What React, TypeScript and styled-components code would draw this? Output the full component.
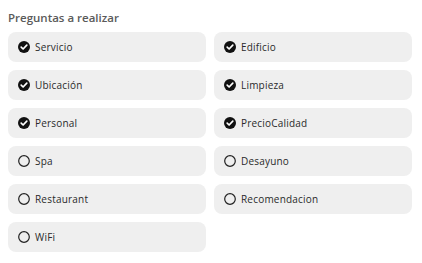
import styled, { createGlobalStyle } from "styled-components";

const GlobalStyle = createGlobalStyle`
  body {
    margin: 0;
    background: #ffffff;
    font-family: "Open Sans", "Liberation Sans", sans-serif;
  }
`;

const questions = [
  { label: "Servicio", checked: true },
  { label: "Edificio", checked: true },
  { label: "Ubicación", checked: true },
  { label: "Limpieza", checked: true },
  { label: "Personal", checked: true },
  { label: "PrecioCalidad", checked: true },
  { label: "Spa", checked: false },
  { label: "Desayuno", checked: false },
  { label: "Restaurant", checked: false },
  { label: "Recomendacion", checked: false },
  { label: "WiFi", checked: false },
];

const CheckIcon = ({ checked }: { checked: boolean }) =>
  checked ? (
    <svg width="12" height="12" viewBox="0 0 12 12">
      <circle cx="6" cy="6" r="6" fill="#111" />
      <path d="M3.2 6.2 L5.1 8 L8.8 4.2" stroke="#fff" strokeWidth="1.7" fill="none" strokeLinecap="round" strokeLinejoin="round" />
    </svg>
  ) : (
    <svg width="12" height="12" viewBox="0 0 12 12">
      <circle cx="6" cy="6" r="5.3" fill="none" stroke="#222" strokeWidth="1.2" />
    </svg>
  );

const App = () => {
  return (
    <>
      <GlobalStyle />
      <Wrapper>
        <Title>Preguntas a realizar</Title>
        <Grid>
          {questions.map((q) => (
            <Option key={q.label}>
              <CheckIcon checked={q.checked} />
              <Label>{q.label}</Label>
            </Option>
          ))}
        </Grid>
      </Wrapper>
    </>
  );
};

export default App;

const Wrapper = styled.div`
  padding: 10px 8px 0 8px;
  width: 404px;
`;

const Title = styled.h3`
  margin: 0 0 6px 0;
  font-size: 11.5px;
  font-weight: 600;
  color: #5a5a5a;
  line-height: 16px;
`;

const Grid = styled.div`
  display: grid;
  grid-template-columns: 198px 198px;
  column-gap: 8px;
  row-gap: 8px;
`;

const Option = styled.div`
  display: flex;
  align-items: center;
  gap: 5px;
  height: 30px;
  padding-left: 10px;
  box-sizing: border-box;
  background: #efefef;
  border-radius: 8px;
`;

const Label = styled.span`
  font-size: 10px;
  color: #2a2a2a;
  letter-spacing: 0.2px;
`;
